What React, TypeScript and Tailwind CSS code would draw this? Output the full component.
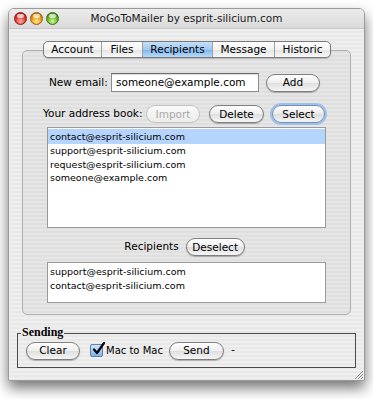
import { ReactNode } from 'react';

const Light = ({ color }: { color: 'red' | 'yellow' | 'green' }) => {
  const bg = {
    red: 'bg-[radial-gradient(circle_at_50%_75%,#ffb3a8_0%,#e0443a_45%,#9b1410_100%)] border-[#8a1a12]',
    yellow: 'bg-[radial-gradient(circle_at_50%_75%,#ffe8a0_0%,#f0a21a_45%,#a25a05_100%)] border-[#936010]',
    green: 'bg-[radial-gradient(circle_at_50%_75%,#d6f7a8_0%,#6cbf2a_45%,#2f6e0c_100%)] border-[#3d6f1a]',
  }[color];
  return (
    <div className={`relative w-[13px] h-[13px] rounded-full border ${bg}`}>
      <div className="absolute left-[2px] top-[1px] w-[7px] h-[4px] rounded-full bg-white/70" />
    </div>
  );
};

const Pill = ({ children, w, state = 'normal' }: { children: ReactNode; w: string; state?: 'normal' | 'disabled' | 'focus' }) => {
  const look =
    state === 'disabled'
      ? 'text-[#a8a8a8] border-[#c4c4c4] bg-[linear-gradient(#fafafa,#ececec)]'
      : state === 'focus'
      ? 'text-black border-[#6f8fb8] bg-[linear-gradient(#ffffff_0%,#eaeaea_50%,#dcdcdc_51%,#f4f4f4_100%)] shadow-[0_0_0_2px_#9ec1ea]'
      : 'text-black border-[#7e7e7e] bg-[linear-gradient(#ffffff_0%,#eeeeee_50%,#dedede_51%,#f6f6f6_100%)] shadow-[0_1px_1px_rgba(0,0,0,0.25)]';
  return (
    <div className={`${w} h-[18px] rounded-full border flex items-center justify-center text-[10.5px] leading-none whitespace-nowrap ${look}`}>
      {children}
    </div>
  );
};

const tabs = ['Account', 'Files', 'Recipients', 'Message', 'Historic'];
const tabWidths = ['w-[57px]', 'w-[41px]', 'w-[70px]', 'w-[62px]', 'w-[56px]'];

export default function App() {
  return (
    <div className="w-[373px] h-[399px] bg-white pt-[8px] pl-[8px] font-['Lucida_Grande','DejaVu_Sans',sans-serif] text-black overflow-hidden">
      <div className="relative w-[357px] h-[373px] rounded-t-[6px] overflow-hidden shadow-[0_7px_14px_rgba(0,0,0,0.55)] border border-[#9a9a9a] bg-[repeating-linear-gradient(180deg,#efefef_0px,#efefef_2px,#e8e8e8_2px,#e8e8e8_4px)] flex flex-col">
        {/* Title bar */}
        <div className="h-[20px] shrink-0 grid grid-cols-[1fr_auto_1fr] items-center bg-[linear-gradient(#ececec,#dadada)] border-b border-[#c6c6c6]">
          <div className="flex items-center gap-[3px] pl-[5px]">
            <Light color="red" />
            <Light color="yellow" />
            <Light color="green" />
          </div>
          <div className="text-[10.5px] text-[#1a1a1a] whitespace-nowrap">MoGoToMailer by esprit-silicium.com</div>
          <div />
        </div>

        {/* Tabs */}
        <div className="relative z-10 mt-[12px] ml-[34px] flex h-[17px] rounded-[5px] border border-[#7a7a7a] bg-[linear-gradient(#ffffff_0%,#f2f2f2_50%,#e4e4e4_51%,#f8f8f8_100%)] self-start overflow-hidden shadow-[0_1px_1px_rgba(0,0,0,0.2)]">
          {tabs.map((t, i) => (
            <div
              key={t}
              className={`${tabWidths[i]} flex items-center justify-center text-[10.5px] leading-none ${i > 0 ? 'border-l border-[#a0a0a0]' : ''} ${
                t === 'Recipients' ? 'bg-[linear-gradient(#c7e0f8_0%,#9fc8f0_50%,#7db5ec_51%,#b6dafb_100%)]' : ''
              }`}
            >
              {t}
            </div>
          ))}
        </div>

        {/* Tab box */}
        <div className="-mt-[8px] mx-[13px] h-[265px] rounded-[5px] border border-[#b0b0b0] bg-black/[0.035] pt-[22px] flex flex-col">
          <div className="flex items-center h-[19px] pl-[26px]">
            <span className="text-[10.5px] w-[62px] whitespace-nowrap">New email:</span>
            <div className="w-[148px] h-[19px] border border-[#8c8c8c] border-t-[#6e6e6e] bg-white flex items-center pl-[4px] text-[10.5px] shadow-[inset_0_1px_1px_rgba(0,0,0,0.15)]">
              someone@example.com
            </div>
            <div className="ml-[7px]">
              <Pill w="w-[54px]">Add</Pill>
            </div>
          </div>

          <div className="flex items-center h-[18px] mt-[13px] pl-[20px]">
            <span className="text-[10.5px] w-[103px] whitespace-nowrap">Your address book:</span>
            <Pill w="w-[54px]" state="disabled">Import</Pill>
            <div className="ml-[9px]">
              <Pill w="w-[55px]">Delete</Pill>
            </div>
            <div className="ml-[8px]">
              <Pill w="w-[53px]" state="focus">Select</Pill>
            </div>
          </div>

          <div className="ml-[24px] mt-[4px] w-[279px] h-[101px] border border-[#9a9a9a] bg-white pt-[1px] text-[9.5px] leading-[13.5px]">
            <div className="bg-[#b5d5fe] pl-[2px] h-[15px] flex items-center">contact@esprit-silicium.com</div>
            <div className="pl-[2px]">support@esprit-silicium.com</div>
            <div className="pl-[2px]">request@esprit-silicium.com</div>
            <div className="pl-[2px]">someone@example.com</div>
          </div>

          <div className="flex items-center justify-center gap-[7px] w-[279px] ml-[22px] mt-[10px] h-[18px]">
            <span className="text-[10.5px]">Recipients</span>
            <Pill w="w-[59px]">Deselect</Pill>
          </div>

          <div className="ml-[24px] mt-[6px] w-[279px] h-[41px] border border-[#9a9a9a] bg-white pt-[2px] text-[9.5px] leading-[13.5px]">
            <div className="pl-[2px]">support@esprit-silicium.com</div>
            <div className="pl-[2px]">contact@esprit-silicium.com</div>
          </div>
        </div>

        {/* Sending group */}
        <div className="relative mt-[18px] mx-[8px] h-[35px] border border-[#4a4a4a] flex items-center pl-[8px]">
          <span className="absolute -top-[9px] left-[3px] px-[1px] bg-[#ececec] font-['Liberation_Serif',serif] font-bold text-[12px] leading-[14px]">
            Sending
          </span>
          <Pill w="w-[54px]">Clear</Pill>
          <div className="ml-[10px] w-[13px] h-[13px] rounded-[2px] border border-[#5a7fa8] bg-[linear-gradient(#cfe6fb,#7fb4ea)] relative">
            <svg viewBox="0 0 14 14" className="absolute -top-[3px] left-[1px] w-[14px] h-[14px]">
              <path d="M2 7.5 L5 11 L12 1" fill="none" stroke="#000" strokeWidth="2.2" strokeLinecap="round" strokeLinejoin="round" />
            </svg>
          </div>
          <span className="ml-[3px] text-[10px] whitespace-nowrap">Mac to Mac</span>
          <div className="ml-[6px]">
            <Pill w="w-[55px]">Send</Pill>
          </div>
          <span className="ml-[7px] text-[11px]">-</span>
        </div>

        {/* Resize grip */}
        <svg viewBox="0 0 10 10" className="absolute right-[1px] bottom-[1px] w-[10px] h-[10px]">
          <path d="M2 10 L10 2 M5 10 L10 5 M8 10 L10 8" stroke="#8a8a8a" strokeWidth="1" />
        </svg>
      </div>
    </div>
  );
}
